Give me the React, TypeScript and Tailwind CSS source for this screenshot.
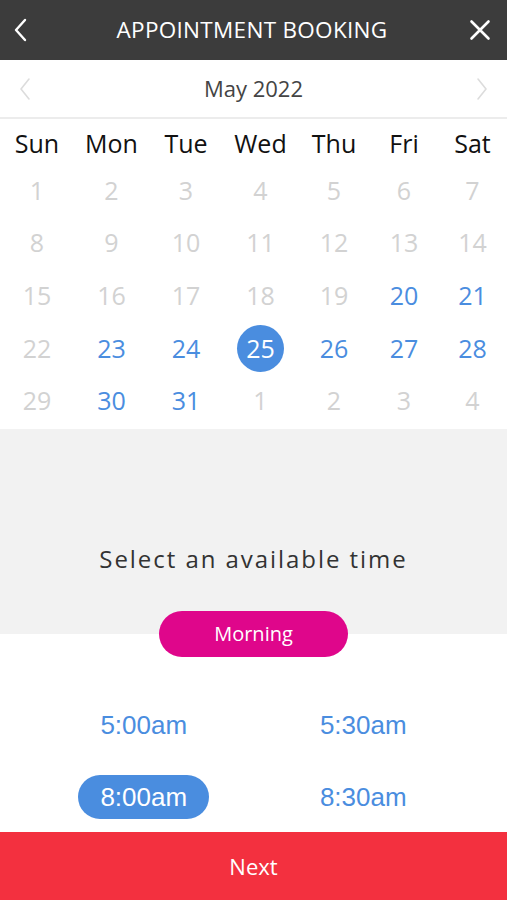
import { useState } from "react";

const weekdays = ["Sun", "Mon", "Tue", "Wed", "Thu", "Fri", "Sat"];

// day cells: n = number, s = state (off | open | picked)
type Cell = { n: number; s: "off" | "open" | "picked" };

const open = [20, 21, 23, 24, 26, 27, 28, 30, 31];

const cells: Cell[] = [
  ...Array.from({ length: 31 }, (_, i) => {
    const n = i + 1;
    if (n === 25) return { n, s: "picked" as const };
    return { n, s: open.includes(n) ? ("open" as const) : ("off" as const) };
  }),
  ...[1, 2, 3, 4].map((n) => ({ n, s: "off" as const })),
];

const slots = ["5:00am", "5:30am", "8:00am", "8:30am"];

export default function App() {
  const [slot, setSlot] = useState("8:00am");

  return (
    <div className="flex h-[900px] w-[507px] flex-col overflow-hidden bg-white font-['Open_Sans',sans-serif]">
      {/* header */}
      <div className="flex h-[60px] shrink-0 items-center justify-between bg-[#3c3c3c] pl-[13px] pr-[16px] text-white">
        <div className="flex w-[30px] justify-start">
          <svg width="16" height="24" viewBox="0 0 16 24" fill="none">
            <path d="M12 2 L3 12 L12 22" stroke="white" strokeWidth="2.4" strokeLinecap="round" strokeLinejoin="round" />
          </svg>
        </div>
        <div className="text-[22.5px] tracking-[0.3px]">APPOINTMENT BOOKING</div>
        <div className="flex w-[30px] justify-end">
          <svg width="22" height="22" viewBox="0 0 22 22" fill="none">
            <path d="M2.5 2.5 L19.5 19.5 M19.5 2.5 L2.5 19.5" stroke="white" strokeWidth="2.6" strokeLinecap="round" />
          </svg>
        </div>
      </div>

      {/* month */}
      <div className="flex h-[59px] shrink-0 items-center justify-between border-b-2 border-[#ececec] px-[18px]">
        <svg width="14" height="24" viewBox="0 0 14 24" fill="none">
          <path d="M11 2 L3 12 L11 22" stroke="#dcdcdc" strokeWidth="1.6" strokeLinecap="round" strokeLinejoin="round" />
        </svg>
        <div className="text-[22px] text-[#444]">May 2022</div>
        <svg width="14" height="24" viewBox="0 0 14 24" fill="none">
          <path d="M3 2 L11 12 L3 22" stroke="#dcdcdc" strokeWidth="1.6" strokeLinecap="round" strokeLinejoin="round" />
        </svg>
      </div>

      {/* calendar */}
      <div className="grid shrink-0 grid-cols-[74px_75px_74px_75px_72px_68px_69px] pb-[2px] text-[25px]">
        {weekdays.map((d) => (
          <div key={d} className="flex h-[45px] items-center justify-center pt-[5px] text-[#111]">
            {d}
          </div>
        ))}
        {cells.map((c, i) => (
          <div key={i} className="flex h-[52.7px] items-center justify-center">
            {c.s === "picked" ? (
              <div className="flex h-[47px] w-[47px] items-center justify-center rounded-full bg-[#4a8ddf] text-white">
                {c.n}
              </div>
            ) : (
              <span className={c.s === "open" ? "text-[#4a8ddf]" : "text-[#d2d2d2]"}>{c.n}</span>
            )}
          </div>
        ))}
      </div>

      {/* time prompt */}
      <div className="flex h-[205px] shrink-0 items-start justify-center bg-[#f2f2f2] pt-[112px]">
        <div className="text-[24px] tracking-[1.95px] text-[#333]">Select an available time</div>
      </div>

      <div className="relative z-10 -mt-[23px] flex shrink-0 justify-center">
        <div className="flex h-[46px] w-[189px] items-center justify-center rounded-full bg-[#df068b] text-[20px] text-white">
          Morning
        </div>
      </div>

      {/* slots */}
      <div className="grid flex-1 grid-cols-2 content-start gap-y-[28px] pt-[46px] font-['Liberation_Sans',Arial,sans-serif] text-[26px]">
        {slots.map((t, i) => (
          <div key={t} className={`flex justify-center ${i % 2 === 0 ? "pl-[34px]" : "pr-[34px]"}`}>
            <button
              onClick={() => setSlot(t)}
              className={
                slot === t
                  ? "h-[44px] w-[131px] rounded-full bg-[#4a8ddf] text-white"
                  : "h-[44px] w-[131px] rounded-full text-[#4a8ddf]"
              }
            >
              {t}
            </button>
          </div>
        ))}
      </div>

      {/* next */}
      <div className="flex h-[68px] shrink-0 items-center justify-center bg-[#f3303f] text-[22px] text-white">
        Next
      </div>
    </div>
  );
}
